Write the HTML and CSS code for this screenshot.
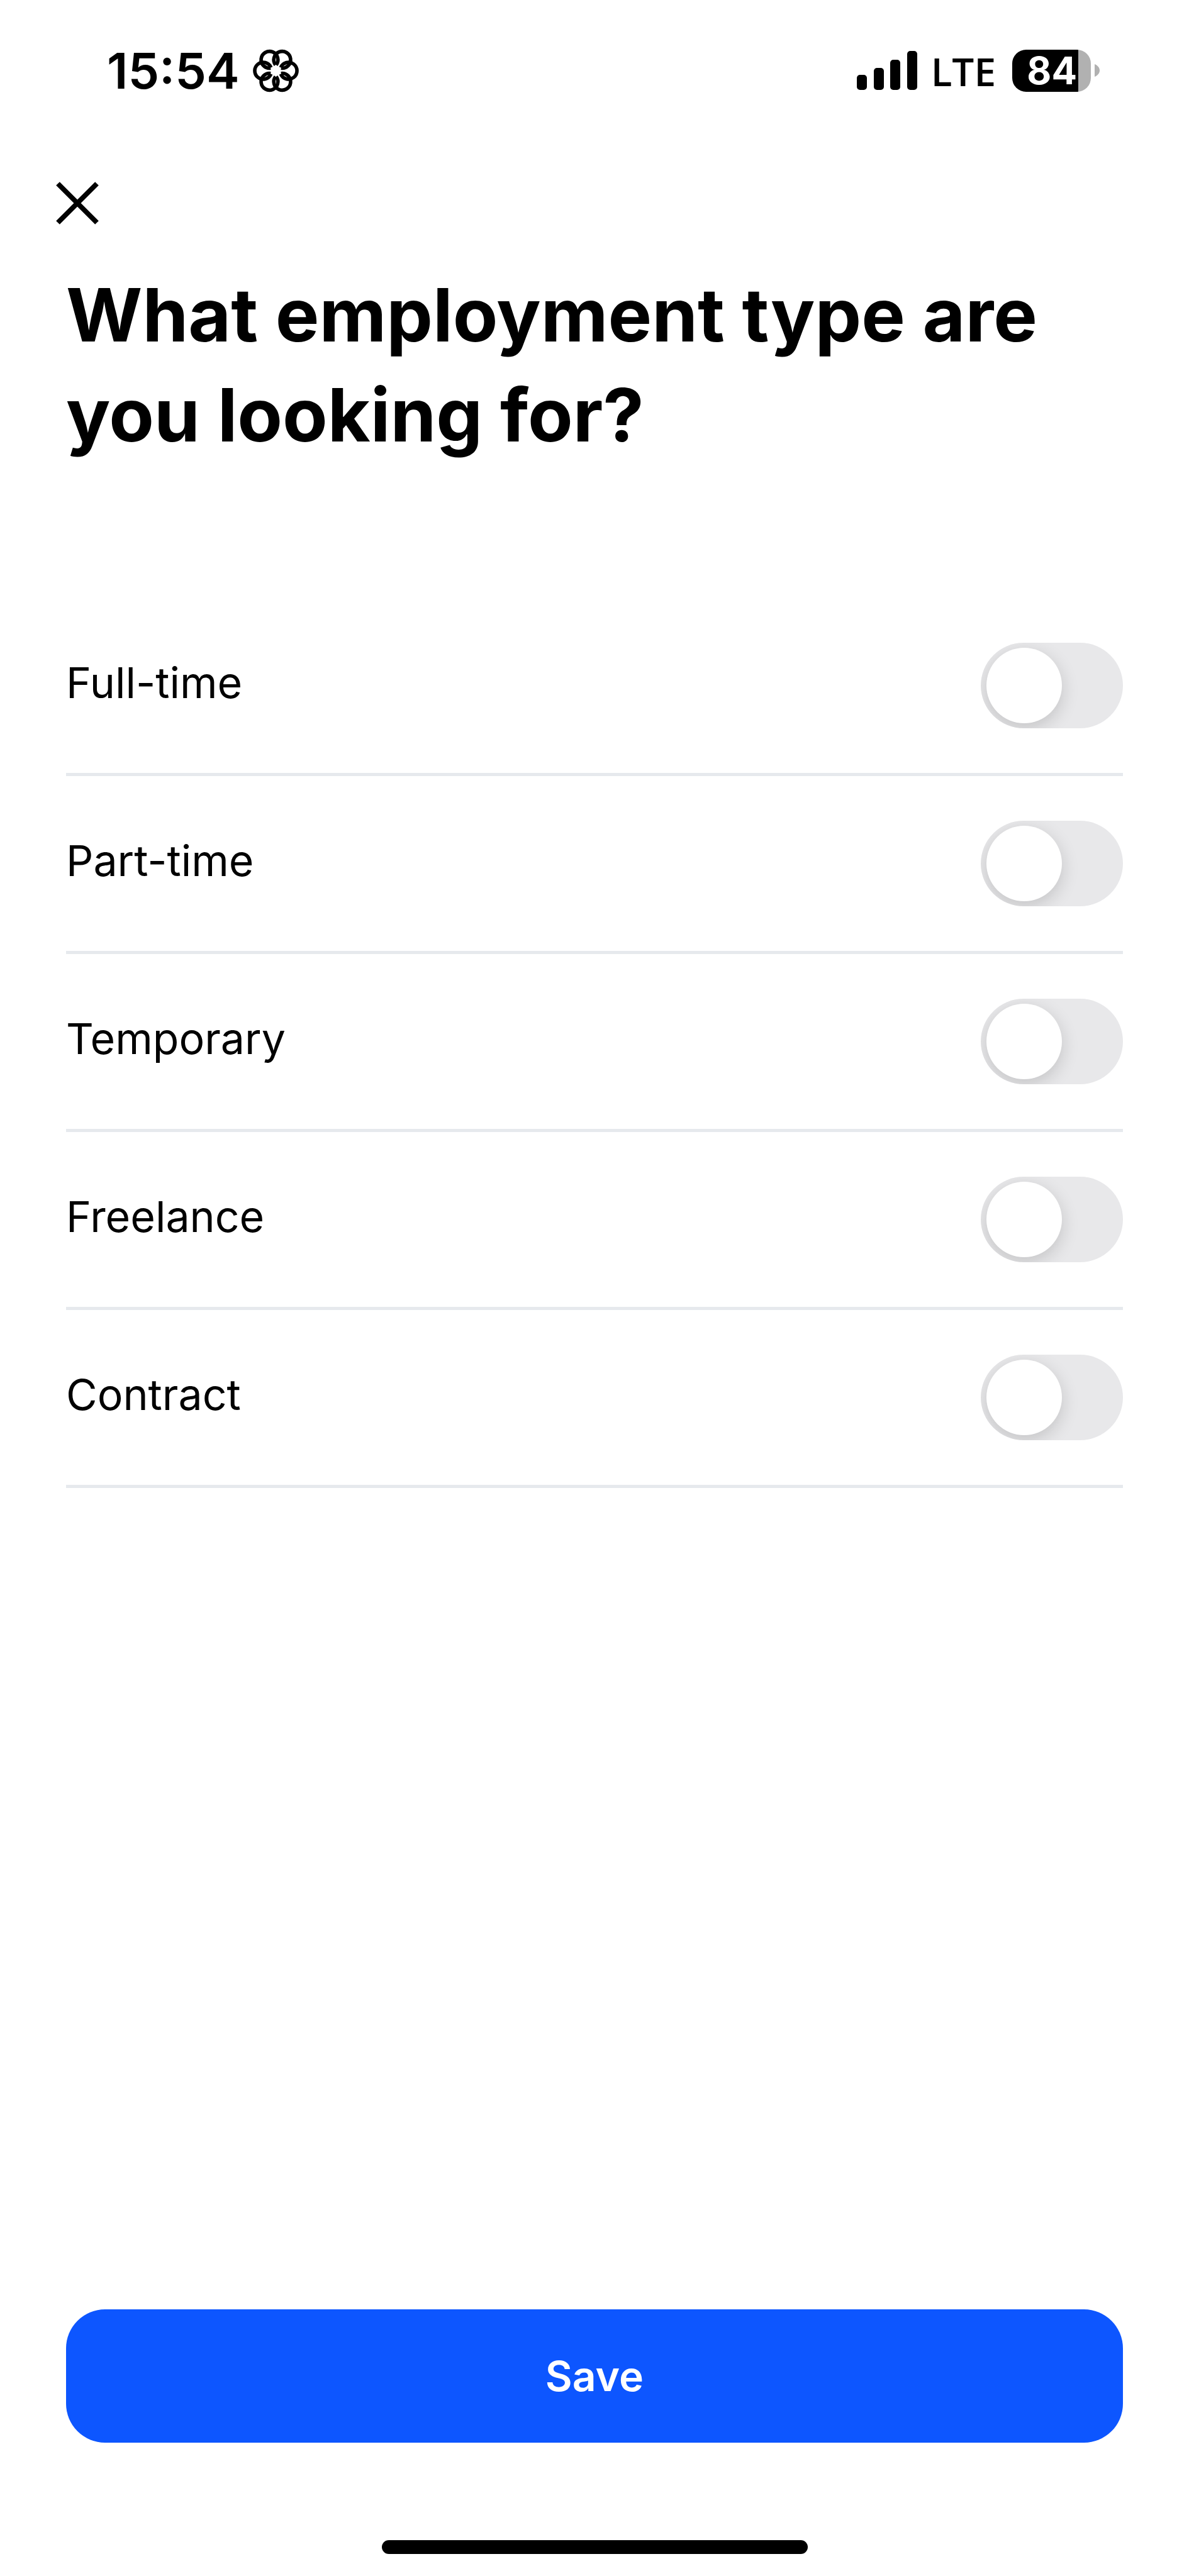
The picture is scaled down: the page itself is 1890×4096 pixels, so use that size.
FILE: index.html
```
<!DOCTYPE html>
<html lang="en">
	<head>
		<meta charset="utf-8">
		<title>Employment type</title>
		<link rel="stylesheet" href="styles.css">
	</head>
	<body>
		<div class="statusBar">
			<div class="statusLeft">
				<span class="time">15:54</span>
				<svg class="flower" viewBox="-140 -140 280 280">
					<path d="M29 19A50 50 0 1 0 29 -19"/>
					<path d="M29 19A50 50 0 1 0 29 -19" transform="rotate(60)"/>
					<path d="M29 19A50 50 0 1 0 29 -19" transform="rotate(120)"/>
					<path d="M29 19A50 50 0 1 0 29 -19" transform="rotate(180)"/>
					<path d="M29 19A50 50 0 1 0 29 -19" transform="rotate(240)"/>
					<path d="M29 19A50 50 0 1 0 29 -19" transform="rotate(300)"/>
				</svg>
			</div>
			<div class="statusRight">
				<svg class="signal" viewBox="0 0 96 62">
					<rect x="0" y="38" width="16" height="24" rx="5"/>
					<rect x="27" y="27" width="16" height="35" rx="5"/>
					<rect x="53" y="14" width="16" height="48" rx="5"/>
					<rect x="80" y="0" width="16" height="62" rx="5"/>
				</svg>
				<span class="network">LTE</span>
				<div class="battery">
					<span class="level">84</span>
					<svg class="nub" viewBox="0 0 8 20"><path d="M0 0C5 2 8 6 8 10S5 18 0 20Z"/></svg>
				</div>
			</div>
		</div>

		<form class="screen">
			<button type="button" class="close" aria-label="Close">
				<svg viewBox="0 0 68 68"><path d="M3 3L65 65M65 3L3 65"/></svg>
			</button>
			<h1>What employment type are you looking for?</h1>

			<div class="options">
				<div class="option">
					<label for="fullTime">Full-time</label>
					<input type="checkbox" class="toggle" id="fullTime">
				</div>
				<div class="option">
					<label for="partTime">Part-time</label>
					<input type="checkbox" class="toggle" id="partTime">
				</div>
				<div class="option">
					<label for="temporary">Temporary</label>
					<input type="checkbox" class="toggle" id="temporary">
				</div>
				<div class="option">
					<label for="freelance">Freelance</label>
					<input type="checkbox" class="toggle" id="freelance">
				</div>
				<div class="option">
					<label for="contract">Contract</label>
					<input type="checkbox" class="toggle" id="contract">
				</div>
			</div>

			<button type="submit" class="save">Save</button>
		</form>

		<div class="homeIndicator"></div>
	</body>
</html>
```

FILE: styles.css
```
*{
	box-sizing:border-box;
}
body{
	margin:0;
	min-height:100vh;
	display:flex;
	flex-direction:column;
	background-color:#fff;
	color:#000;
	font-family:Inter, "Liberation Sans", sans-serif;
}

/* status bar */
.statusBar{
	display:flex;
	justify-content:space-between;
	height:224px;
	padding:0 142px 0 170px;
}
.statusLeft,.statusRight{
	display:flex;
	align-items:center;
	height:224px;
}
.statusLeft{
	gap:20px;
}
.time{
	font-size:79px;
	font-weight:600;
}
.flower{
	width:75px;
	height:75px;
	fill:none;
	stroke:#000;
	stroke-width:21;
}
.signal{
	width:96px;
	height:62px;
}
.network{
	margin:2px 26px 0 22px;
	font-family:"Open Sans", "Noto Sans", sans-serif;
	font-size:62px;
	font-weight:600;
}
.battery{
	display:flex;
	align-items:center;
	gap:6px;
}
.level{
	width:125px;
	height:67px;
	padding-right:22px;
	border-radius:22px;
	background:linear-gradient(to right, #000 105px, #b1b1b1 105px);
	color:#fff;
	font-size:60px;
	font-weight:700;
	line-height:66px;
	text-align:right;
}
.nub{
	width:8px;
	height:20px;
	fill:#b1b1b1;
}

/* content */
.screen{
	flex:1;
	display:flex;
	flex-direction:column;
	padding:65px 105px 0;
}
.close{
	width:68px;
	height:68px;
	margin-left:-16px;
	padding:0;
	border:0;
	background:none;
	cursor:pointer;
}
.close svg{
	display:block;
	stroke:#000;
	stroke-width:8;
}
h1{
	margin:64px 0 0;
	font-size:117px;
	font-weight:700;
	line-height:159px;
}
.options{
	margin-top:212px;
}
.option{
	display:flex;
	align-items:center;
	justify-content:space-between;
	height:283px;
	border-bottom:5px solid #e6e9ed;
}
.option label{
	font-size:68px;
	line-height:80px;
	padding-bottom:10px;
}
.toggle{
	-webkit-appearance:none;
	appearance:none;
	width:226px;
	height:136px;
	margin:0;
	padding:8px 9px;
	border-radius:68px;
	background:#e8e8ea;
	overflow:hidden;
	cursor:pointer;
}
.toggle::before{
	content:"";
	display:block;
	width:120px;
	height:120px;
	border-radius:50%;
	background:#fff;
	box-shadow:0 8px 28px rgba(0,0,0,.16);
}
.toggle:checked{
	background:#0d56ff;
}
.toggle:checked::before{
	margin-left:auto;
}
.save{
	height:212px;
	margin-top:auto;
	border:0;
	border-radius:62px;
	background:#0d56ff;
	color:#fff;
	font-family:inherit;
	font-size:66px;
	font-weight:600;
	cursor:pointer;
}
.homeIndicator{
	width:677px;
	height:22px;
	margin:155px auto 35px;
	border-radius:11px;
	background:#000;
}
```
